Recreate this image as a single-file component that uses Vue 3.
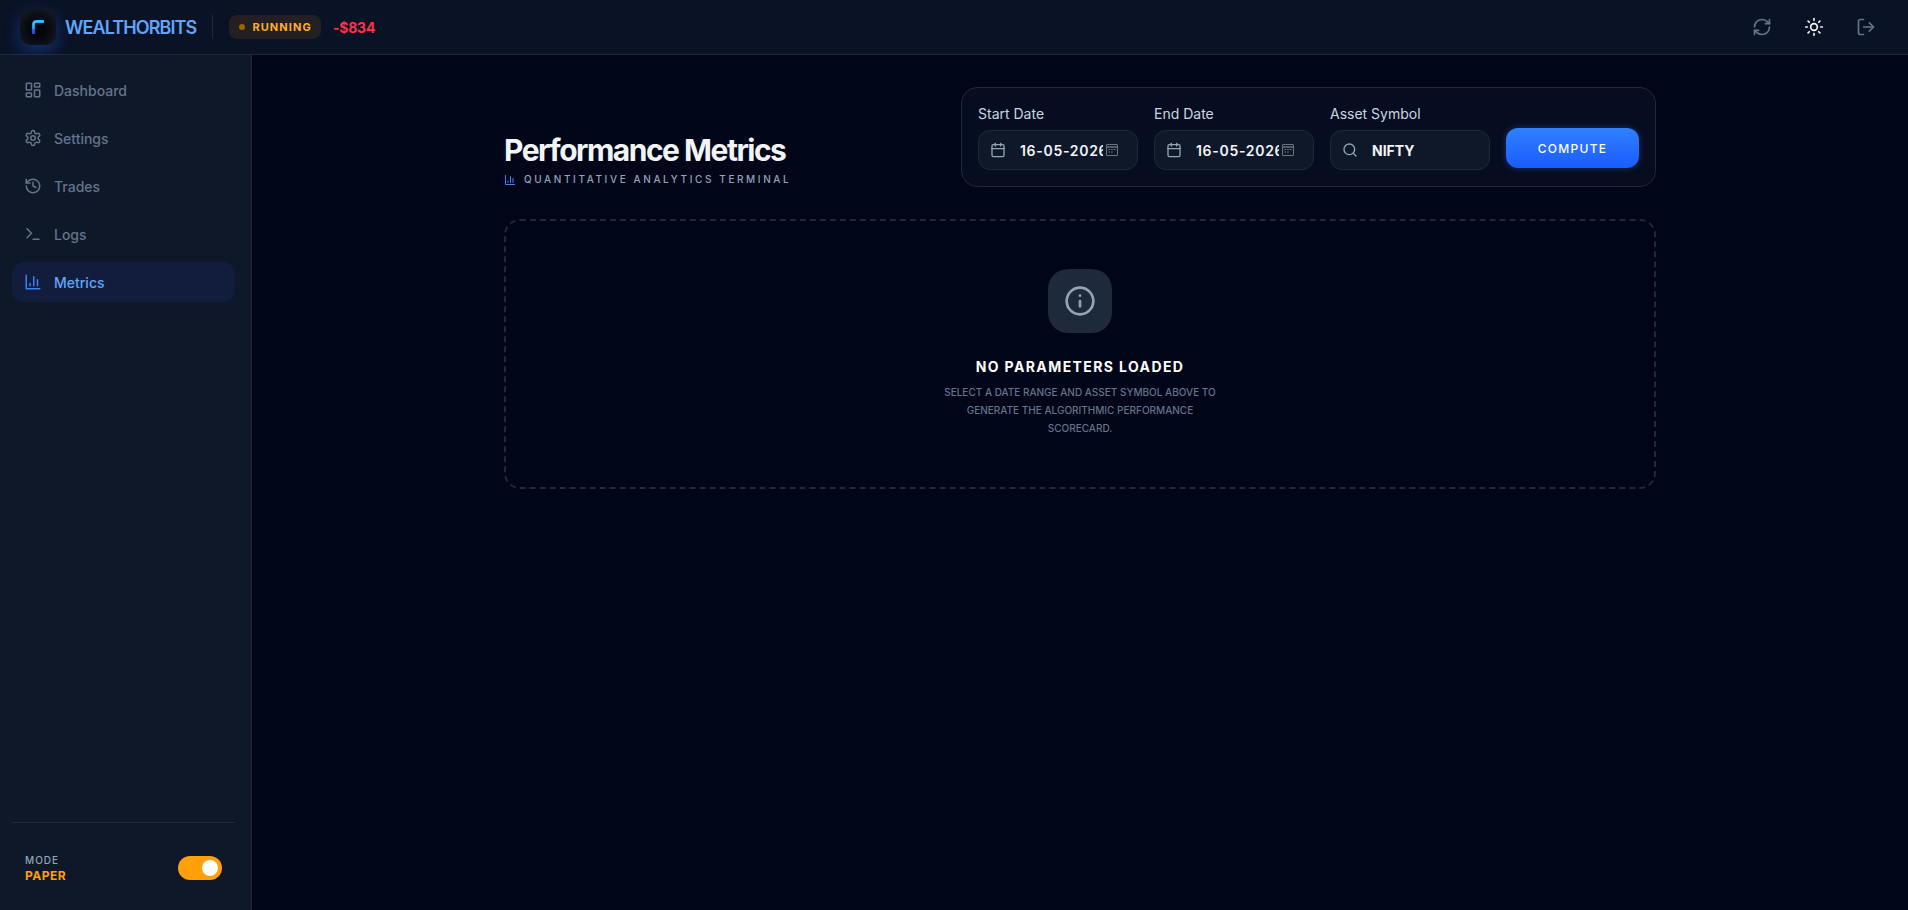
<script setup>
import { ref } from 'vue';

const navItems = ref([
  { label: 'Dashboard', icon: 'dashboard' },
  { label: 'Settings', icon: 'settings' },
  { label: 'Trades', icon: 'history' },
  { label: 'Logs', icon: 'terminal' },
  { label: 'Metrics', icon: 'chart', active: true }
]);

const dateFields = ref([
  { label: 'Start Date', value: '16-05-2026' },
  { label: 'End Date', value: '16-05-2026' }
]);
</script>

<template>
  <div class="app">
    <header class="topbar">
      <div class="brand">
        <div class="logo">
          <svg viewBox="0 0 36 36" width="36" height="36" fill="none">
            <defs>
              <linearGradient id="logoGrad" x1="0" y1="0" x2="0" y2="1">
                <stop offset="0" stop-color="#19b6f5" />
                <stop offset="1" stop-color="#2a3fd0" />
              </linearGradient>
            </defs>
            <path d="M24 12.5H16.5a3 3 0 0 0-3 3V25" stroke="url(#logoGrad)" stroke-width="3.2" />
            <path d="M23 12.2H16.5a3.2 3.2 0 0 0-3.2 3.2V20" stroke="#5fd4ff" stroke-width="0.8" />
          </svg>
        </div>
        <span class="brand-name">WEALTHORBITS</span>
      </div>
      <div class="divider"></div>
      <div class="status">
        <span class="status-dot"></span>
        <span>RUNNING</span>
      </div>
      <span class="pnl">-$834</span>
      <div class="top-actions">
        <button class="icon-btn">
          <svg class="ic20" viewBox="0 0 24 24"><path d="M3 12a9 9 0 0 1 9-9 9.75 9.75 0 0 1 6.74 2.74L21 8" /><path d="M21 3v5h-5" /><path d="M21 12a9 9 0 0 1-9 9 9.75 9.75 0 0 1-6.74-2.74L3 16" /><path d="M8 16H3v5" /></svg>
        </button>
        <button class="icon-btn sun">
          <svg class="ic20" viewBox="0 0 24 24"><circle cx="12" cy="12" r="4" /><path d="M12 2v2" /><path d="M12 20v2" /><path d="m4.93 4.93 1.41 1.41" /><path d="m17.66 17.66 1.41 1.41" /><path d="M2 12h2" /><path d="M20 12h2" /><path d="m6.34 17.66-1.41 1.41" /><path d="m19.07 4.93-1.41 1.41" /></svg>
        </button>
        <button class="icon-btn">
          <svg class="ic20" viewBox="0 0 24 24"><path d="M9 21H5a2 2 0 0 1-2-2V5a2 2 0 0 1 2-2h4" /><polyline points="16 17 21 12 16 7" /><line x1="21" y1="12" x2="9" y2="12" /></svg>
        </button>
      </div>
    </header>

    <div class="body">
      <aside class="sidebar">
        <nav class="nav">
          <a v-for="item in navItems" :key="item.label" class="nav-item" :class="{ active: item.active }">
            <svg class="ic18" viewBox="0 0 24 24">
              <template v-if="item.icon === 'dashboard'">
                <rect x="3" y="3" width="7" height="9" rx="1" /><rect x="14" y="3" width="7" height="5" rx="1" /><rect x="14" y="12" width="7" height="9" rx="1" /><rect x="3" y="16" width="7" height="5" rx="1" />
              </template>
              <template v-else-if="item.icon === 'settings'">
                <path d="M12.22 2h-.44a2 2 0 0 0-2 2v.18a2 2 0 0 1-1 1.73l-.43.25a2 2 0 0 1-2 0l-.15-.08a2 2 0 0 0-2.73.73l-.22.38a2 2 0 0 0 .73 2.73l.15.1a2 2 0 0 1 1 1.72v.51a2 2 0 0 1-1 1.74l-.15.09a2 2 0 0 0-.73 2.73l.22.38a2 2 0 0 0 2.73.73l.15-.08a2 2 0 0 1 2 0l.43.25a2 2 0 0 1 1 1.73V20a2 2 0 0 0 2 2h.44a2 2 0 0 0 2-2v-.18a2 2 0 0 1 1-1.73l.43-.25a2 2 0 0 1 2 0l.15.08a2 2 0 0 0 2.73-.73l.22-.39a2 2 0 0 0-.73-2.73l-.15-.08a2 2 0 0 1-1-1.74v-.5a2 2 0 0 1 1-1.74l.15-.09a2 2 0 0 0 .73-2.73l-.22-.38a2 2 0 0 0-2.73-.73l-.15.08a2 2 0 0 1-2 0l-.43-.25a2 2 0 0 1-1-1.73V4a2 2 0 0 0-2-2z" /><circle cx="12" cy="12" r="3" />
              </template>
              <template v-else-if="item.icon === 'history'">
                <path d="M3 12a9 9 0 1 0 9-9 9.75 9.75 0 0 0-6.74 2.74L3 8" /><path d="M3 3v5h5" /><path d="M12 7v5l4 2" />
              </template>
              <template v-else-if="item.icon === 'terminal'">
                <polyline points="4 17 10 11 4 5" /><line x1="12" y1="19" x2="20" y2="19" />
              </template>
              <template v-else>
                <path d="M3 3v18h18" /><path d="M18 17V9" /><path d="M13 17V5" /><path d="M8 17v-3" />
              </template>
            </svg>
            <span>{{ item.label }}</span>
          </a>
        </nav>
        <div class="mode">
          <div class="mode-text">
            <div class="mode-label">MODE</div>
            <div class="mode-value">PAPER</div>
          </div>
          <div class="toggle"><span class="knob"></span></div>
        </div>
      </aside>

      <main class="main">
        <div class="content">
          <div class="head-row">
            <div class="title-block">
              <h1>Performance Metrics</h1>
              <p class="subtitle">
                <svg class="ic12" viewBox="0 0 24 24"><path d="M3 3v18h18" /><path d="M18 17V9" /><path d="M13 17V5" /><path d="M8 17v-3" /></svg>
                QUANTITATIVE ANALYTICS TERMINAL
              </p>
            </div>
            <div class="filters">
              <div v-for="field in dateFields" :key="field.label" class="field">
                <label>{{ field.label }}</label>
                <div class="input">
                  <svg class="ic16" viewBox="0 0 24 24"><rect x="3" y="4" width="18" height="18" rx="2" /><path d="M16 2v4" /><path d="M8 2v4" /><path d="M3 10h18" /></svg>
                  <span class="date-text">{{ field.value }}</span>
                  <svg class="picker" viewBox="0 0 14 14" width="14" height="14" fill="none">
                    <rect x="1.5" y="1.5" width="11" height="11" rx="0.5" stroke="#6b7280" />
                    <path d="M1.5 4h11" stroke="#6b7280" stroke-width="1.5" />
                    <path d="M3.5 6.5h1.5M6.2 6.5h1.5M8.9 6.5h1.5M3.5 9h1.5M6.2 9h1.5" stroke="#7b8494" />
                  </svg>
                </div>
              </div>
              <div class="field">
                <label>Asset Symbol</label>
                <div class="input">
                  <svg class="ic16" viewBox="0 0 24 24"><circle cx="11" cy="11" r="8" /><path d="m21 21-4.3-4.3" /></svg>
                  <span class="symbol">NIFTY</span>
                </div>
              </div>
              <button class="compute">COMPUTE</button>
            </div>
          </div>

          <section class="empty">
            <div class="empty-icon">
              <svg class="ic32" viewBox="0 0 24 24"><circle cx="12" cy="12" r="10" /><path d="M12 16v-4" /><path d="M12 8h.01" /></svg>
            </div>
            <h3>NO PARAMETERS LOADED</h3>
            <p>SELECT A DATE RANGE AND ASSET SYMBOL ABOVE TO GENERATE THE ALGORITHMIC PERFORMANCE SCORECARD.</p>
          </section>
        </div>
      </main>
    </div>
  </div>
</template>

<style>
body {
  margin: 0;
  background: #000518;
}
</style>

<style scoped>
.app {
  height: 910px;
  display: flex;
  flex-direction: column;
  overflow: hidden;
  background: #000518;
  color: #f1f5f9;
  font-family: Inter, "Liberation Sans", sans-serif;
}

svg[class^="ic"] {
  fill: none;
  stroke: currentColor;
  stroke-width: 2;
  stroke-linecap: round;
  stroke-linejoin: round;
  flex-shrink: 0;
}

.ic12 { width: 12px; height: 12px; color: #3b82f6; }
.ic16 { width: 16px; height: 16px; color: #94a3b8; }
.ic18 { width: 18px; height: 18px; }
.ic20 { width: 20px; height: 20px; }
.ic32 { width: 32px; height: 32px; color: #94a3b8; }

/* top bar */
.topbar {
  height: 54px;
  box-sizing: content-box;
  display: flex;
  align-items: center;
  padding: 0 24px 0 20px;
  background: #0a1226;
  border-bottom: 1px solid #1e293b;
  flex-shrink: 0;
}

.brand {
  display: flex;
  align-items: center;
  gap: 9px;
}

.logo {
  width: 36px;
  height: 36px;
  box-sizing: border-box;
  border-radius: 10px;
  background: radial-gradient(circle at 50% 55%, #04060a 30%, #1a1f29 100%);
  box-shadow: 0 6px 16px rgba(37, 99, 235, 0.4);
}

.logo svg {
  display: block;
}

.brand-name {
  font-size: 18px;
  font-weight: 600;
  letter-spacing: -0.9px;
  color: #60a5fa;
}

.divider {
  width: 1px;
  height: 24px;
  background: #1e293b;
  margin: 0 16px;
}

.status {
  height: 24px;
  display: flex;
  align-items: center;
  gap: 7px;
  padding: 0 9px 0 10px;
  border-radius: 8px;
  background: #241f22;
  color: #ffb020;
  font-size: 11px;
  font-weight: 700;
  letter-spacing: 1.1px;
}

.status-dot {
  width: 6px;
  height: 6px;
  border-radius: 50%;
  background: #a16207;
}

.pnl {
  margin-left: 12px;
  font-size: 14px;
  font-weight: 700;
  letter-spacing: -0.2px;
  color: #ff3344;
}

.top-actions {
  margin-left: auto;
  display: flex;
  gap: 16px;
}

.icon-btn {
  width: 36px;
  height: 36px;
  display: flex;
  align-items: center;
  justify-content: center;
  padding: 0;
  background: none;
  border: none;
  color: #64748b;
}

.icon-btn.sun {
  color: #f1f5f9;
}

/* sidebar */
.body {
  flex: 1;
  display: flex;
  min-height: 0;
}

.sidebar {
  width: 251px;
  flex-shrink: 0;
  display: flex;
  flex-direction: column;
  background: #0f1829;
  border-right: 1px solid #1e293b;
}

.nav {
  flex: 1;
  display: flex;
  flex-direction: column;
  gap: 8px;
  padding: 15px 16px 0 12px;
}

.nav-item {
  height: 40px;
  display: flex;
  align-items: center;
  gap: 12px;
  padding: 0 12px;
  border-radius: 12px;
  color: #64748b;
  font-size: 14px;
  font-weight: 500;
}

.nav-item.active {
  background: #121d3d;
  color: #60a5fa;
}

.nav-item.active svg {
  color: #3b82f6;
}

.mode {
  margin: 0 16px 0 12px;
  border-top: 1px solid #1e293b;
  padding: 33px 13px 0;
  height: 88px;
  box-sizing: border-box;
  display: flex;
  justify-content: space-between;
}

.mode-text {
  margin-top: -2px;
}

.mode-label {
  font-size: 10px;
  font-weight: 500;
  letter-spacing: 1px;
  color: #94a3b8;
}

.mode-value {
  margin-top: 2px;
  font-size: 12px;
  font-weight: 700;
  letter-spacing: 0.5px;
  color: #ff9f0a;
}

.toggle {
  position: relative;
  width: 44px;
  height: 24px;
  border-radius: 12px;
  background: #ff9f0a;
}

.knob {
  position: absolute;
  top: 4px;
  right: 4px;
  width: 16px;
  height: 16px;
  border-radius: 50%;
  background: #fff;
}

/* main */
.main {
  flex: 1;
  display: flex;
  justify-content: center;
  padding-top: 32px;
}

.content {
  width: 1152px;
}

.head-row {
  display: flex;
  justify-content: space-between;
  align-items: flex-end;
}

h1 {
  margin: 0;
  font-size: 30px;
  font-weight: 700;
  letter-spacing: -1.5px;
  line-height: 36px;
  color: #f1f5f9;
}

.subtitle {
  margin: 4px 0 0;
  display: flex;
  align-items: center;
  gap: 8px;
  font-size: 10px;
  line-height: 15px;
  font-weight: 500;
  letter-spacing: 2.6px;
  color: #94a3b8;
}

.filters {
  display: flex;
  align-items: flex-end;
  gap: 16px;
  padding: 16px;
  background: #070d20;
  border: 1px solid #1e293b;
  border-radius: 16px;
}

.field {
  width: 160px;
}

label {
  display: block;
  height: 20px;
  margin-bottom: 6px;
  font-size: 14px;
  font-weight: 400;
  line-height: 20px;
  color: #cbd5e1;
}

.input {
  height: 40px;
  box-sizing: border-box;
  display: flex;
  align-items: center;
  padding: 0 11px;
  background: #0f1829;
  border: 1px solid #1e293b;
  border-radius: 12px;
}

.date-text {
  margin-left: 14px;
  width: 83px;
  overflow: hidden;
  white-space: nowrap;
  font-size: 14px;
  font-weight: 600;
  letter-spacing: 0.7px;
  color: #f1f5f9;
}

.picker {
  flex-shrink: 0;
  margin-left: 2px;
}

.symbol {
  margin-left: 14px;
  font-size: 14px;
  font-weight: 700;
  color: #f1f5f9;
}

.compute {
  width: 133px;
  height: 40px;
  margin-bottom: 2px;
  background: linear-gradient(180deg, #2f80ff, #1a5cff);
  border: none;
  border-radius: 12px;
  color: #fff;
  font-family: inherit;
  font-size: 12px;
  font-weight: 500;
  letter-spacing: 1.3px;
  box-shadow: 0 0 6px rgba(37, 99, 235, 0.4);
}

.empty {
  margin-top: 32px;
  height: 270px;
  box-sizing: border-box;
  display: flex;
  flex-direction: column;
  align-items: center;
  padding-top: 48px;
  border: 2px dashed #1e293b;
  border-radius: 16px;
}

.empty-icon {
  width: 64px;
  height: 64px;
  display: flex;
  align-items: center;
  justify-content: center;
  border-radius: 20px;
  background: #1e293b;
}

h3 {
  margin: 24px 0 0;
  font-size: 14px;
  font-weight: 700;
  letter-spacing: 1.4px;
  line-height: 20px;
  color: #fff;
}

.empty p {
  margin: 6px 0 0;
  width: 288px;
  text-align: center;
  font-size: 10px;
  font-weight: 500;
  line-height: 18px;
  color: #64748b;
}
</style>
